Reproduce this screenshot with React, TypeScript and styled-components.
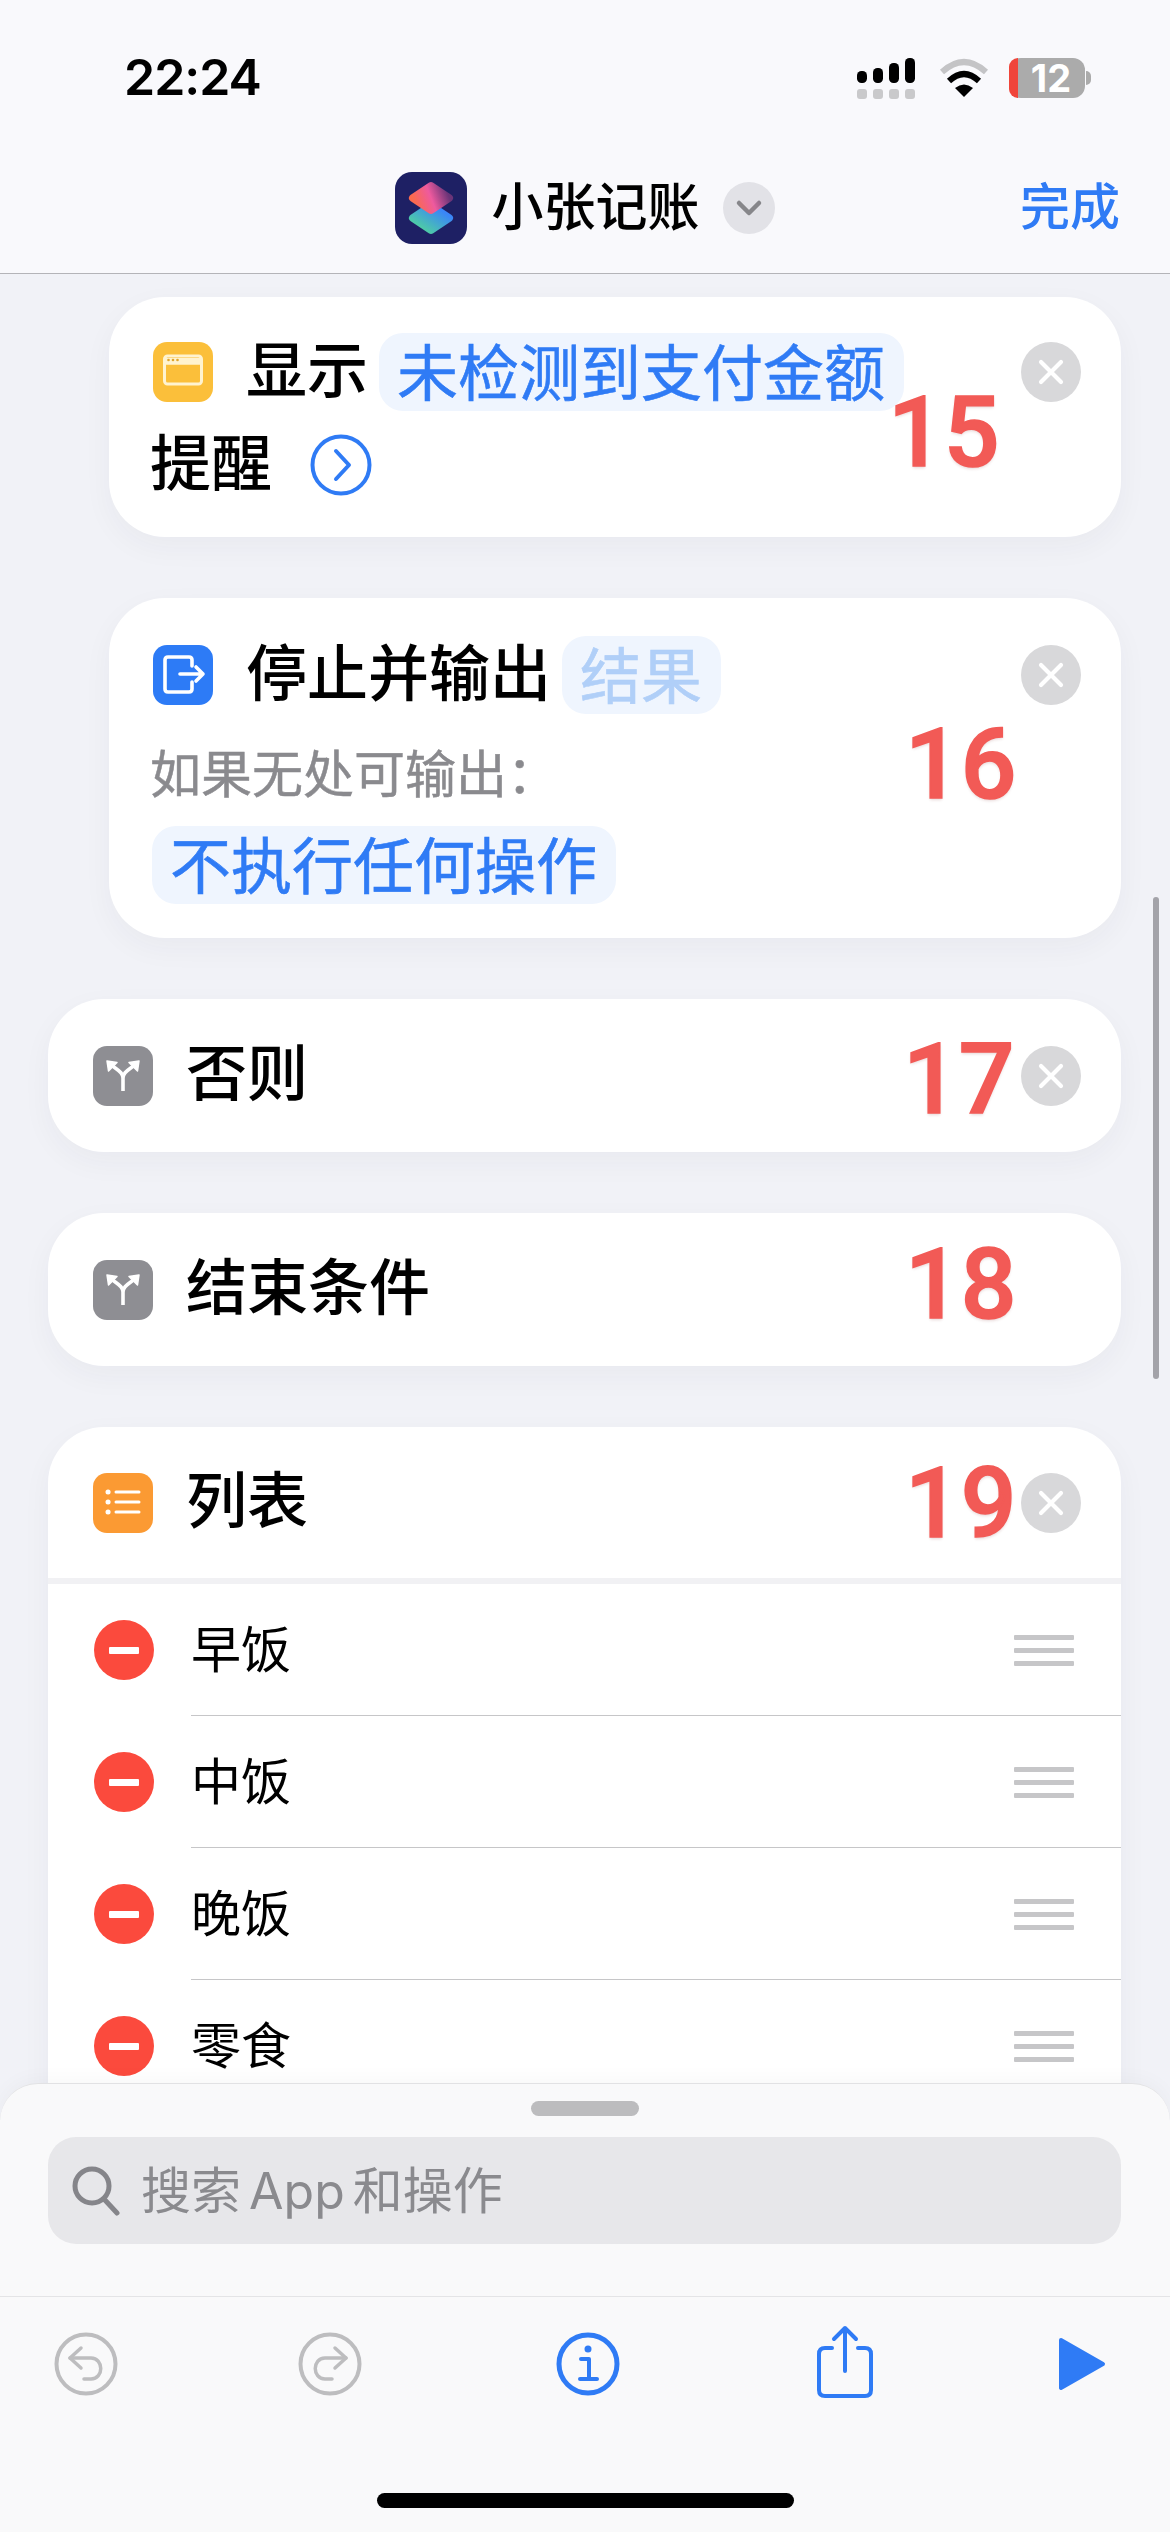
import React from 'react';
import styled, { createGlobalStyle } from 'styled-components';

const FONT = `Inter, "Noto Sans CJK SC", sans-serif`;
const BLUE = '#2f7bf5';

const GlobalStyle = createGlobalStyle`
    html, body {
        margin: 0;
        padding: 0;
        background: #f1f2f7;
        font-family: ${FONT};
    }
`;

const Page = styled.div`
    position: relative;
    width: 1170px;
    height: 2532px;
    overflow: hidden;
    background: #f1f2f7;
`;

const Header = styled.header`
    height: 273px;
    background: #f9f9fc;
    border-bottom: 1px solid #b4b4b8;
`;

const StatusBar = styled.div`
    height: 154px;
    box-sizing: border-box;
    padding: 53px 79px 0 124px;
    display: flex;
    align-items: flex-start;
`;

const Time = styled.div`
    font-size: 50px;
    line-height: 48px;
    font-weight: 600;
    letter-spacing: -1px;
    color: #000;
`;

const StatusIcons = styled.div`
    margin-left: auto;
    display: flex;
    align-items: flex-start;
    margin-top: 5px;
    gap: 24px;
`;

const Battery = styled.div`
    position: relative;
    width: 76px;
    height: 40px;
    border-radius: 12px;
    background: #ababab;
    display: flex;
    align-items: center;
    justify-content: center;
    padding-left: 8px;
    box-sizing: border-box;
    color: #fff;
    font-size: 38px;
    font-weight: 700;
    line-height: 40px;
`;

const BatteryLevel = styled.span`
    position: absolute;
    left: 0;
    top: 0;
    bottom: 0;
    width: 9px;
    border-radius: 12px 0 0 12px;
    background: #f0453a;
`;

const BatteryWrap = styled.div`
    display: flex;
    align-items: center;
    margin-left: -4px;
`;

const BatteryNub = styled.span`
    width: 5px;
    height: 14px;
    margin-left: 1px;
    border-radius: 0 5px 5px 0;
    background: #ababab;
`;

const NavBar = styled.div`
    height: 108px;
    display: grid;
    grid-template-columns: 1fr auto 1fr;
    align-items: center;
`;

const TitleGroup = styled.div`
    grid-column: 2;
    display: flex;
    align-items: center;
`;

const Title = styled.span`
    margin-left: 24px;
    font-size: 52px;
    line-height: 60px;
    font-weight: 500;
    color: #000;
`;

const TitleChevron = styled.span`
    width: 52px;
    height: 52px;
    margin-left: 23px;
    border-radius: 50%;
    background: #e2e2e7;
    display: flex;
    align-items: center;
    justify-content: center;
`;

const Done = styled.span`
    grid-column: 3;
    justify-self: end;
    margin-right: 50px;
    margin-top: -3px;
    font-size: 50px;
    font-weight: 500;
    line-height: 60px;
    color: ${BLUE};
`;

const ActionList = styled.main`
    display: flex;
    flex-direction: column;
    gap: 61px;
    padding-top: 23px;
`;

const Card = styled.section<{ $indent?: boolean }>`
    position: relative;
    margin-left: ${({ $indent }) => ($indent ? '109px' : '48px')};
    margin-right: 49px;
    border-radius: 56px;
    background: #fff;
    box-shadow: 0 10px 30px rgba(40, 40, 70, 0.045);
`;

const DetailBody = styled.div<{ $top: number; $bottom: number }>`
    display: flex;
    flex-direction: column;
    padding: ${({ $top, $bottom }) => `${$top}px 40px ${$bottom}px 44px`};
`;

const Line = styled.div<{ $height?: number; $gap?: number }>`
    display: flex;
    align-items: center;
    height: ${({ $height }) => $height ?? 80}px;
    margin-top: ${({ $gap }) => $gap ?? 0}px;
`;

const SimpleHead = styled.div<{ $height: number }>`
    display: flex;
    align-items: center;
    height: ${({ $height }) => $height}px;
    padding: 0 40px 0 45px;
`;

const ActionIcon = styled.span<{ $bg: string }>`
    flex: none;
    width: 60px;
    height: 60px;
    border-radius: 14px;
    background: ${({ $bg }) => $bg};
    display: flex;
`;

const ActionName = styled.span<{ $first?: boolean }>`
    margin-left: ${({ $first }) => ($first ? '33px' : '-3px')};
    padding-bottom: 3px;
    font-size: 61px;
    line-height: 80px;
    font-weight: 500;
    color: #000;
    white-space: nowrap;
`;

const Pill = styled.span<{ $faded?: boolean; $flush?: boolean }>`
    display: inline-flex;
    align-items: center;
    height: 78px;
    box-sizing: border-box;
    margin-left: ${({ $flush }) => ($flush ? '-1px' : '11px')};
    padding: 0 19px 5px 18px;
    border-radius: 24px;
    background: #eff5fe;
    font-size: 61px;
    font-weight: 400;
    -webkit-text-stroke: 0.6px ${({ $faded }) => ($faded ? '#b0cff8' : BLUE)};
    color: ${({ $faded }) => ($faded ? '#b0cff8' : BLUE)};
    white-space: nowrap;
`;

const Hint = styled.span`
    margin-left: -3px;
    padding-bottom: 3px;
    font-size: 51px;
    line-height: 60px;
    -webkit-text-stroke: 0.5px #8a8a8e;
    color: #8a8a8e;
    white-space: nowrap;
`;

const CloseButton = styled.span`
    flex: none;
    margin-left: auto;
    width: 60px;
    height: 60px;
    border-radius: 50%;
    background: #d8d8da;
    display: flex;
    align-items: center;
    justify-content: center;
`;

const MoreButton = styled.span`
    margin-left: 38px;
    display: flex;
`;

// red step numbers written over the screenshot
const StepNumber = styled.span<{ $top: number; $left: number }>`
    position: absolute;
    top: ${({ $top }) => $top}px;
    left: ${({ $left }) => $left}px;
    font-family: Roboto, sans-serif;
    font-size: 98px;
    line-height: 96px;
    font-weight: 500;
    -webkit-text-stroke: 1.6px #f25a56;
    color: #f25a56;
    text-shadow: 0 2px 3px rgba(120, 40, 40, 0.18);
`;

const ListDivider = styled.div`
    height: 6px;
    background: #f1f1f4;
`;

const ListRows = styled.div`
    padding-bottom: 120px;
`;

const ListRow = styled.div`
    position: relative;
    height: 132px;
    display: flex;
    align-items: center;
    padding: 0 47px 0 46px;

    &:not(:last-child)::after {
        content: '';
        position: absolute;
        left: 143px;
        right: 0;
        bottom: 0;
        height: 1px;
        background: #c6c6c8;
    }
`;

const RemoveDot = styled.span`
    width: 60px;
    height: 60px;
    border-radius: 50%;
    background: #fb4a3d;
    display: flex;
    align-items: center;
    justify-content: center;

    &::before {
        content: '';
        width: 30px;
        height: 7px;
        border-radius: 1px;
        background: #fff;
    }
`;

const RowText = styled.span`
    margin-left: 37px;
    font-size: 50px;
    line-height: 60px;
    color: #000;
`;

const Grip = styled.span`
    margin-left: auto;
    width: 60px;
    display: flex;
    flex-direction: column;
    gap: 8px;

    & > i {
        display: block;
        height: 5px;
        background: #c6c6c8;
        border-radius: 1px;
    }
`;

const ScrollThumb = styled.div`
    position: absolute;
    left: 1153px;
    top: 897px;
    width: 6px;
    height: 482px;
    border-radius: 3px;
    background: #a3a3a9;
`;

const Sheet = styled.div`
    position: absolute;
    left: 0;
    right: 0;
    top: 2083px;
    bottom: 0;
    background: #f9f9fa;
    border-top: 1px solid #e2e2e4;
    border-radius: 38px 38px 0 0;
    box-shadow: 0 -4px 20px rgba(0, 0, 0, 0.03);
`;

const SheetGrip = styled.div`
    width: 108px;
    height: 15px;
    margin: 17px auto 0;
    border-radius: 8px;
    background: #bcbcbe;
`;

const SearchField = styled.div`
    height: 107px;
    margin: 21px 49px 0 48px;
    border-radius: 28px;
    background: #e7e7ea;
    display: flex;
    align-items: center;
    padding-left: 23px;
`;

const SearchText = styled.span`
    margin-left: 20px;
    font-size: 50px;
    line-height: 60px;
    word-spacing: -6px;
    color: #8a8a8e;
`;

const Toolbar = styled.div`
    margin-top: 52px;
    height: 130px;
    border-top: 1px solid #e4e4e6;
    display: flex;
    align-items: flex-start;
`;

const ToolButton = styled.span<{ $left: number; $top: number }>`
    display: flex;
    margin-left: ${({ $left }) => $left}px;
    margin-top: ${({ $top }) => $top}px;
`;

const HomeIndicator = styled.div`
    position: absolute;
    left: 377px;
    top: 2493px;
    width: 417px;
    height: 15px;
    border-radius: 8px;
    background: #000;
`;

const CloseGlyph = () => (
    <svg width="28" height="28" viewBox="0 0 28 28">
        <path d="M4 4 L24 24 M24 4 L4 24" stroke="#fff" strokeWidth="4.2" strokeLinecap="round" />
    </svg>
);

const BranchGlyph = () => (
    <svg width="60" height="60" viewBox="0 0 60 60" fill="none" stroke="#fff" strokeWidth="3.6">
        <path d="M30 45 V32 C30 26 24 24 17 18 M30 32 C30 26 36 24 43 18" />
        <path d="M14 15 L24 16.5 L15.5 25 Z M46 15 L36 16.5 L44.5 25 Z" fill="#fff" strokeWidth="1.5" strokeLinejoin="round" />
    </svg>
);

const SIGNAL_BARS = [
    { x: 0, y: 13, h: 12 },
    { x: 16, y: 10, h: 15 },
    { x: 32, y: 5, h: 20 },
    { x: 48, y: 0, h: 25 },
];

const SignalIcon = () => (
    <svg width="58" height="42" viewBox="0 0 58 42">
        {SIGNAL_BARS.map((b) => (
            <g key={b.x}>
                <rect x={b.x} y={b.y} width="10" height={b.h} rx="4.5" fill="#000" />
                <rect x={b.x} y="31" width="10" height="10" rx="3" fill="#c9c9cb" />
            </g>
        ))}
    </svg>
);

const WifiIcon = () => (
    <svg width="50" height="40" viewBox="0 0 50 40" fill="none">
        <path d="M3 14 Q25 -6 47 14" stroke="#c4c4c6" strokeWidth="6" />
        <path d="M10 23 Q25 9 40 23" stroke="#000" strokeWidth="6" />
        <path d="M16 30 Q25 23 34 30 L25 39 Z" fill="#000" />
    </svg>
);

const ShortcutsLogo = () => (
    <svg width="72" height="72" viewBox="0 0 72 72">
        <defs>
            <linearGradient id="logoTop" x1="0.05" y1="0.7" x2="1" y2="0.45">
                <stop offset="0" stopColor="#fb6a4e" />
                <stop offset="0.5" stopColor="#ee5a9e" />
                <stop offset="1" stopColor="#6b3478" />
            </linearGradient>
            <linearGradient id="logoBottom" x1="0.2" y1="1" x2="0.9" y2="0.3">
                <stop offset="0" stopColor="#4fd0a0" />
                <stop offset="1" stopColor="#3a86f8" />
            </linearGradient>
        </defs>
        <rect width="72" height="72" rx="17" fill="#1e2064" />
        <path d="M36 34 L54 46 L36 58 L18 46 Z" fill="url(#logoBottom)" stroke="url(#logoBottom)" strokeWidth="8" strokeLinejoin="round" />
        <path d="M36 14 L54 26 L36 38 L18 26 Z" fill="url(#logoTop)" stroke="url(#logoTop)" strokeWidth="8" strokeLinejoin="round" />
    </svg>
);

export default function App() {
    return (
        <Page>
            <GlobalStyle />
            <Header>
                <StatusBar>
                    <Time>22:24</Time>
                    <StatusIcons>
                        <SignalIcon />
                        <WifiIcon />
                        <BatteryWrap>
                            <Battery>
                                <BatteryLevel />
                                12
                            </Battery>
                            <BatteryNub />
                        </BatteryWrap>
                    </StatusIcons>
                </StatusBar>
                <NavBar>
                    <TitleGroup>
                        <ShortcutsLogo />
                        <Title>小张记账</Title>
                        <TitleChevron>
                            <svg width="28" height="18" viewBox="0 0 28 18" fill="none">
                                <path d="M4 4 L14 14 L24 4" stroke="#86868a" strokeWidth="4.5" strokeLinecap="round" strokeLinejoin="round" />
                            </svg>
                        </TitleChevron>
                    </TitleGroup>
                    <Done>完成</Done>
                </NavBar>
            </Header>

            <ActionList>
                <Card $indent>
                    <DetailBody $top={35} $bottom={32}>
                        <Line>
                            <ActionIcon $bg="#fbbf3a">
                                <svg width="60" height="60" viewBox="0 0 60 60" fill="none">
                                    <rect x="11.5" y="14" width="37" height="28" rx="3" stroke="#fff3d0" strokeWidth="3" />
                                    <path d="M11.5 21 H48.5" stroke="#fff3d0" strokeWidth="3.5" />
                                    <path d="M11.5 16 H48.5 V20 H11.5 Z" fill="#fff3d0" />
                                    <circle cx="15.5" cy="18" r="1.3" fill="#e0a52c" />
                                    <circle cx="20" cy="18" r="1.3" fill="#e0a52c" />
                                    <circle cx="24.5" cy="18" r="1.3" fill="#e0a52c" />
                                </svg>
                            </ActionIcon>
                            <ActionName $first>显示</ActionName>
                            <Pill>未检测到支付金额</Pill>
                            <CloseButton>
                                <CloseGlyph />
                            </CloseButton>
                        </Line>
                        <Line $gap={13}>
                            <ActionName>提醒</ActionName>
                            <MoreButton>
                                <svg width="62" height="62" viewBox="0 0 62 62" fill="none" stroke={BLUE} strokeWidth="4">
                                    <circle cx="31" cy="31" r="28.5" />
                                    <path d="M26 17 L39 31 L26 45" strokeLinecap="round" strokeLinejoin="round" />
                                </svg>
                            </MoreButton>
                        </Line>
                    </DetailBody>
                    <StepNumber $left={779} $top={88}>15</StepNumber>
                </Card>

                <Card $indent>
                    <DetailBody $top={37} $bottom={34}>
                        <Line>
                            <ActionIcon $bg="#2d7bf6">
                                <svg width="60" height="60" viewBox="0 0 60 60" fill="none" stroke="#fff" strokeWidth="3.6" strokeLinecap="round" strokeLinejoin="round">
                                    <path d="M39 21 V15 C39 13 38 12 36 12 H15 C13 12 12 13 12 15 V44 C12 46 13 47 15 47 H36 C38 47 39 46 39 44 V37" />
                                    <path d="M27 29 H50 M43 22 L50 29 L43 36" />
                                </svg>
                            </ActionIcon>
                            <ActionName $first>停止并输出</ActionName>
                            <Pill $faded>结果</Pill>
                            <CloseButton>
                                <CloseGlyph />
                            </CloseButton>
                        </Line>
                        <Line $height={60} $gap={31}>
                            <Hint>如果无处可输出：</Hint>
                        </Line>
                        <Line $height={78} $gap={20}>
                            <Pill $flush>不执行任何操作</Pill>
                        </Line>
                    </DetailBody>
                    <StepNumber $left={796} $top={119}>16</StepNumber>
                </Card>

                <Card>
                    <SimpleHead $height={153}>
                        <ActionIcon $bg="#8e8e93">
                            <BranchGlyph />
                        </ActionIcon>
                        <ActionName $first>否则</ActionName>
                        <CloseButton>
                            <CloseGlyph />
                        </CloseButton>
                    </SimpleHead>
                    <StepNumber $left={855} $top={33}>17</StepNumber>
                </Card>

                <Card>
                    <SimpleHead $height={153}>
                        <ActionIcon $bg="#8e8e93">
                            <BranchGlyph />
                        </ActionIcon>
                        <ActionName $first>结束条件</ActionName>
                    </SimpleHead>
                    <StepNumber $left={857} $top={24}>18</StepNumber>
                </Card>

                <Card>
                    <SimpleHead $height={151}>
                        <ActionIcon $bg="#fb9a33">
                            <svg width="60" height="60" viewBox="0 0 60 60" fill="none" stroke="#fff" strokeWidth="3" strokeLinecap="round">
                                <path d="M23 19 H46 M23 29 H46 M23 39 H46" />
                                <path d="M15 19 H15.1 M15 29 H15.1 M15 39 H15.1" strokeWidth="5" />
                            </svg>
                        </ActionIcon>
                        <ActionName $first>列表</ActionName>
                        <CloseButton>
                            <CloseGlyph />
                        </CloseButton>
                    </SimpleHead>
                    <StepNumber $left={857} $top={29}>19</StepNumber>
                    <ListDivider />
                    <ListRows>
                        {['早饭', '中饭', '晚饭', '零食'].map((name) => (
                            <ListRow key={name}>
                                <RemoveDot />
                                <RowText>{name}</RowText>
                                <Grip>
                                    <i />
                                    <i />
                                    <i />
                                </Grip>
                            </ListRow>
                        ))}
                    </ListRows>
                </Card>
            </ActionList>

            <ScrollThumb />

            <Sheet>
                <SheetGrip />
                <SearchField>
                    <svg width="50" height="50" viewBox="0 0 50 50" fill="none" stroke="#85858a" strokeWidth="5" strokeLinecap="round">
                        <circle cx="21" cy="20" r="17" />
                        <path d="M33 33 L46 47" />
                    </svg>
                    <SearchText>搜索 App 和操作</SearchText>
                </SearchField>
                <Toolbar>
                    <ToolButton $left={54} $top={35}>
                        <svg width="64" height="64" viewBox="0 0 64 64" fill="none" stroke="#bdbdbf" strokeWidth="4" strokeLinecap="round" strokeLinejoin="round">
                            <circle cx="32" cy="32" r="29.5" />
                            <path d="M27 16 L16 26 L27 36" strokeWidth="3.5" />
                            <path d="M16 26 H37 C50 26 50 47 37 47 H30" strokeWidth="3.5" />
                        </svg>
                    </ToolButton>
                    <ToolButton $left={180} $top={35}>
                        <svg width="64" height="64" viewBox="0 0 64 64" fill="none" stroke="#bdbdbf" strokeWidth="4" strokeLinecap="round" strokeLinejoin="round">
                            <circle cx="32" cy="32" r="29.5" />
                            <path d="M37 16 L48 26 L37 36" strokeWidth="3.5" />
                            <path d="M48 26 H27 C14 26 14 47 27 47 H34" strokeWidth="3.5" />
                        </svg>
                    </ToolButton>
                    <ToolButton $left={194} $top={35}>
                        <svg width="64" height="64" viewBox="0 0 64 64" fill="none" stroke={BLUE} strokeWidth="5">
                            <circle cx="32" cy="32" r="29" />
                            <circle cx="32" cy="17" r="3.5" fill={BLUE} stroke="none" />
                            <path d="M25 27 H33 V47 M24 47 H41" strokeWidth="4" strokeLinecap="round" strokeLinejoin="round" />
                        </svg>
                    </ToolButton>
                    <ToolButton $left={197} $top={28}>
                        <svg width="56" height="73" viewBox="0 0 56 73" fill="none" stroke={BLUE} strokeWidth="4" strokeLinecap="round" strokeLinejoin="round">
                            <path d="M15 23 H8 C4 23 2 25 2 29 V65 C2 69 4 71 8 71 H48 C52 71 54 69 54 65 V29 C54 25 52 23 48 23 H41" />
                            <path d="M28 46 V3 M17 14 L28 3 L39 14" />
                        </svg>
                    </ToolButton>
                    <ToolButton $left={185} $top={40}>
                        <svg width="48" height="54" viewBox="0 0 48 54">
                            <path d="M3 3 L45 27 L3 51 Z" fill={BLUE} stroke={BLUE} strokeWidth="4" strokeLinejoin="round" />
                        </svg>
                    </ToolButton>
                </Toolbar>
            </Sheet>
            <HomeIndicator />
        </Page>
    );
}
